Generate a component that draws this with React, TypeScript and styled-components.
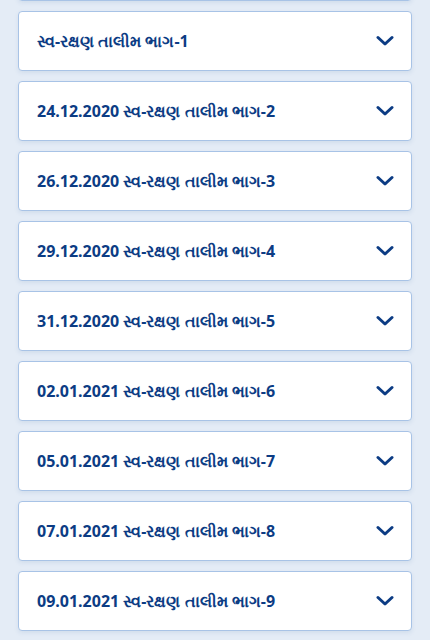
import React from "react";
import styled, { createGlobalStyle } from "styled-components";

const GlobalStyle = createGlobalStyle`
  html, body {
    margin: 0;
    padding: 0;
    background: #e4ecf6;
  }
  body {
    font-family: "Noto Sans", "Open Sans", sans-serif;
  }
`;

const Page = styled.div`
  display: flex;
  flex-direction: column;
  gap: 10px;
  padding: 0 18px 20px;
  margin-top: -59px;
`;

const Card = styled.div`
  display: flex;
  align-items: center;
  justify-content: space-between;
  height: 60px;
  box-sizing: border-box;
  padding: 0 17px 0 18px;
  background: #ffffff;
  border: 1px solid #a8c3e6;
  border-radius: 4px;
  box-shadow: 0 2px 4px rgba(80, 120, 170, 0.12);
`;

const Title = styled.span`
  color: #0c3c84;
  font-size: 16px;
  font-weight: 700;
  line-height: 20px;
  padding-bottom: 1px;
`;

const Chevron = () => (
  <svg width="18" height="12" viewBox="0 0 18 12" style={{ flex: "none" }}>
    <path
      d="M2 2.5 L9 9 L16 2.5"
      fill="none"
      stroke="#0c3c84"
      strokeWidth="3"
      strokeLinecap="round"
      strokeLinejoin="round"
    />
  </svg>
);

// first card is scrolled mostly out of view, only its bottom edge shows
const items = [
  "",
  "સ્વ-રક્ષણ તાલીમ ભાગ-1",
  "24.12.2020 સ્વ-રક્ષણ તાલીમ ભાગ-2",
  "26.12.2020 સ્વ-રક્ષણ તાલીમ ભાગ-3",
  "29.12.2020 સ્વ-રક્ષણ તાલીમ ભાગ-4",
  "31.12.2020 સ્વ-રક્ષણ તાલીમ ભાગ-5",
  "02.01.2021 સ્વ-રક્ષણ તાલીમ ભાગ-6",
  "05.01.2021 સ્વ-રક્ષણ તાલીમ ભાગ-7",
  "07.01.2021 સ્વ-રક્ષણ તાલીમ ભાગ-8",
  "09.01.2021 સ્વ-રક્ષણ તાલીમ ભાગ-9",
];

const App = () => {
  return (
    <>
      <GlobalStyle />
      <Page>
        {items.map((t, i) => (
          <Card key={i}>
            <Title>{t}</Title>
            <Chevron />
          </Card>
        ))}
      </Page>
    </>
  );
};

export default App;
